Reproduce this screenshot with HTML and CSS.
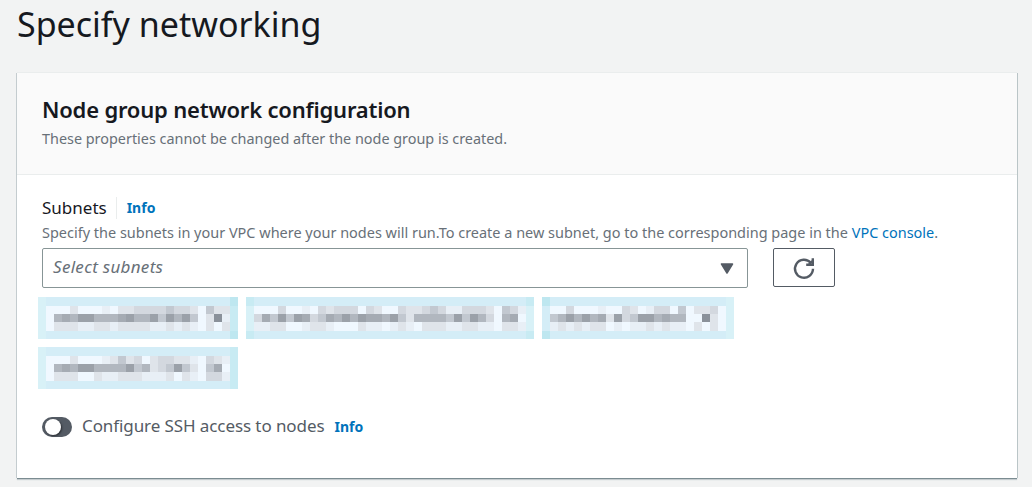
FILE: index.html
```html
<!DOCTYPE html>
<html lang="en">
<head>
<meta charset="utf-8">
<title>Specify networking</title>
<link rel="stylesheet" href="styles.css">
</head>
<body>
<h1 class="page-title">Specify networking</h1>
<main class="card">
  <header class="card-header">
    <h2 class="card-title">Node group network configuration</h2>
    <p class="card-note">These properties cannot be changed after the node group is created.</p>
  </header>
  <section class="card-body">
    <div class="label-row"><span class="label">Subnets</span><a class="info divided">Info</a></div>
    <p class="hint">Specify the subnets in your VPC where your nodes will run.To create a new subnet, go to the corresponding page in the <a>VPC console</a>.</p>
    <div class="control-row">
      <div class="select"><span class="placeholder">Select subnets</span>
        <svg width="14" height="11" viewBox="0 0 14 11"><path d="M1.5 1h11L7 10z" fill="#545b64" stroke="#545b64" stroke-width="1.5" stroke-linejoin="round"/></svg>
      </div>
      <button class="refresh" aria-label="Refresh">
        <svg width="24" height="24" viewBox="0 0 24 24" fill="none" stroke="#545b64" stroke-width="2.4"><path d="M21 12.8A9 9 0 1 1 18.8 6.8"/><path d="M20.8 2.2v6.5H14.2"/><path d="M17 8.5L20.5 5"/></svg>
      </button>
    </div>
    <div class="chips" id="chips"></div>
    <div class="toggle-row"><span class="toggle"></span><span class="toggle-label">Configure SSH access to nodes</span><a class="info">Info</a></div>
  </section>
</main>
<script src="chips.js"></script>
</body>
</html>
```
FILE: styles.css
```css
* { box-sizing: border-box; }
body { margin: 0; height: 487px; overflow: hidden; background: #f2f3f3; color: #16191f; font-family: "Noto Sans", sans-serif; padding: 0 14px 0 17px; }
h1, h2, p { margin: 0; font-weight: 400; }
a { color: #0073bb; }
.page-title { height: 73px; padding-top: 1px; font-size: 34px; line-height: 46px; }
.card { width: 1000px; height: 405px; background: #fff; box-shadow: 0 1px 0 0 #7b8c91, 0 2px 1px 0 #c5cccf, 1px 0 0 0 #b9c3c6, -1px 0 0 0 #c5cccf, 0 -1px 0 0 #eaeded; }
.card-header { height: 102px; padding: 20px 25px 0; background: #fafafa; border-bottom: 1px solid #eaeded; }
.card-title { font-size: 22px; line-height: 32px; font-weight: 600; letter-spacing: -0.2px; }
.card-note { margin-top: 4px; font-size: 14.4px; line-height: 20px; color: #687078; }
.card-body { padding: 22px 25px 0; }
.label-row { display: flex; align-items: center; height: 22px; font-size: 17px; }
.label { padding-bottom: 2px; }
.info { font-size: 14px; font-weight: 700; }
.divided { margin-left: 9px; padding-left: 10px; border-left: 1px solid #eaeded; line-height: 22px; }
.hint { height: 29px; font-size: 14.48px; line-height: 28px; color: #687078; white-space: nowrap; }
.control-row { display: flex; gap: 25px; height: 40px; }
.select { display: flex; align-items: center; justify-content: space-between; width: 706px; padding: 0 13px 0 10px; border: 1px solid #879596; border-radius: 2px; }
.placeholder { padding-bottom: 3px; font-size: 17px; font-style: italic; letter-spacing: 0.3px; color: #687078; }
.refresh { display: grid; place-items: center; width: 62px; height: 39px; padding: 0; border: 1px solid #545b64; border-radius: 2px; background: #fff; }
.chips { display: flex; flex-wrap: wrap; gap: 8px; width: 705px; margin: 9px 0 0 -4px; }
.chip { display: grid; grid-template-rows: 9px 8px 8px 9px 8px; background: #d4edf7; }
.e1 { background: #d8f1f7; } .e2 { background: #c8ebf3; } .e3 { background: #bee7f0; }
.l0 { background: #f0f8ff; } .l1 { background: #e8eff6; } .l2 { background: #dfe4ea; }
.l3 { background: #d3d8df; } .l4 { background: #c2c8d0; } .l5 { background: #b1b7bf; }
.l6 { background: #a5abb3; } .l7 { background: #9ba1a9; } .l8 { background: #8a919a; }
.toggle-row { display: flex; align-items: center; height: 24px; margin-top: 26px; }
.toggle { width: 30px; height: 20px; border-radius: 10px; background: #545b64; }
.toggle::before { content: ""; display: block; width: 16px; height: 16px; margin: 2px 3px; border-radius: 50%; background: #fff; box-shadow: 1px 1px 2px rgba(0,0,0,.5); }
.toggle-label { margin: 0 10px; padding-bottom: 3px; font-size: 17px; letter-spacing: -0.09px; color: #545b64; }
.toggle-row .info { padding-bottom: 1px; }
```
FILE: chips.js
```js
// Each chip: three rows of shade levels, then edge shades (left corner, left side, right corner, right side).
const chips = [
  ["00020001022333343320422", "05657755567557475740281", "02221122122221121210202", "1132"],
  ["0003001032333032003223431133320431", "3647476346575766574255554747530560", "1122001221000211012102221122110221", "2121"],
  ["0030001003201330402230", "4575756273477565500820", "1212122010112121102020", "3011"],
  ["00020001242302332210321", "05657755557452347420460", "02220021122211120210331", "1122"]
];
document.getElementById("chips").innerHTML = chips.map(([a, b, c, e]) => {
  const n = a.length + 2;
  const cell = k => `<i class="${k}"></i>`;
  const edge = cell("e" + e[0]) + "<i></i>".repeat(n - 2) + cell("e" + e[2]);
  const body = [a, b, c].map(r => cell("e" + e[1]) + [...r].map(v => cell("l" + v)).join("") + cell("e" + e[3])).join("");
  return `<div class="chip" style="grid-template-columns:repeat(${n},8px)">${edge}${body}${edge}</div>`;
}).join("");
```
